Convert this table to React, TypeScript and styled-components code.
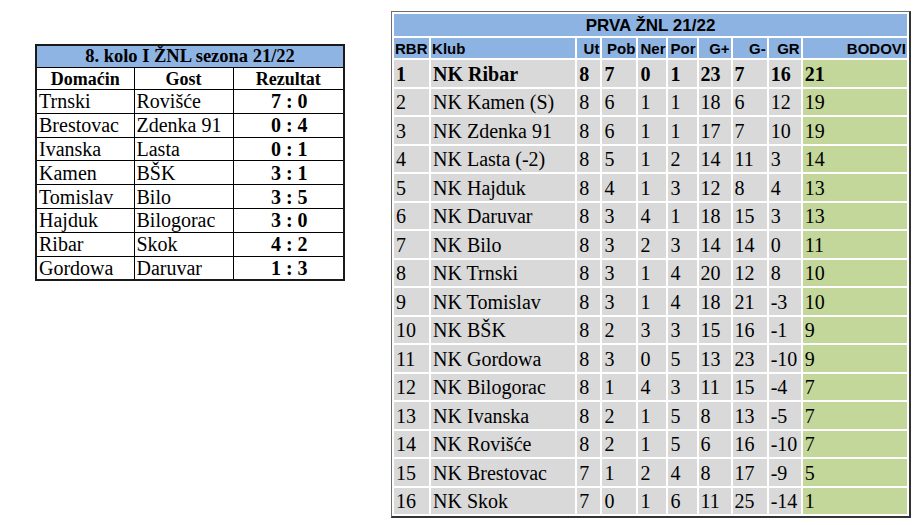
import { createGlobalStyle, styled } from 'styled-components';

const GlobalStyle = createGlobalStyle`
  html, body {
    margin: 0;
    padding: 0;
    background: #ffffff;
  }
  body {
    font-family: "Liberation Serif", "Times New Roman", serif;
    color: #000;
  }
`;

const Page = styled.div`
  display: flex;
  flex-direction: row;
  align-items: flex-start;
  padding: 11px 0 0 35px;
  gap: 46px;
`;

/* ---------- left: fixtures ---------- */

const Fixtures = styled.table`
  margin-top: 33px;
  border-collapse: collapse;
  table-layout: fixed;
  width: 308px;
  border: 2px solid #1a1a1a;
`;

const FixTitle = styled.th`
  background: #8eb4e3;
  height: 21px;
  padding: 0;
  font-family: "Liberation Serif", "Times New Roman", serif;
  font-weight: bold;
  font-size: 18.5px;
  line-height: 1;
  text-align: center;
  border: 1px solid #000;
`;

const FixHead = styled.th`
  height: 21px;
  padding: 0;
  font-family: "Liberation Serif", "Times New Roman", serif;
  font-weight: bold;
  font-size: 18px;
  line-height: 1;
  text-align: center;
  border: 1px solid #000;
`;

const FixCell = styled.td<{ $score?: boolean }>`
  height: 22.8px;
  padding: 0 0 0 2px;
  font-size: 20px;
  line-height: 1;
  white-space: nowrap;
  overflow: hidden;
  border: 1px solid #000;
  text-align: ${(p) => (p.$score ? 'center' : 'left')};
  font-weight: ${(p) => (p.$score ? 'bold' : 'normal')};
`;

const fixtures = [
  ['Trnski', 'Rovišće', '7 : 0'],
  ['Brestovac', 'Zdenka 91', '0 : 4'],
  ['Ivanska', 'Lasta', '0 : 1'],
  ['Kamen', 'BŠK', '3 : 1'],
  ['Tomislav', 'Bilo', '3 : 5'],
  ['Hajduk', 'Bilogorac', '3 : 0'],
  ['Ribar', 'Skok', '4 : 2'],
  ['Gordowa', 'Daruvar', '1 : 3'],
];

/* ---------- right: standings ---------- */

const Standings = styled.table`
  table-layout: fixed;
  width: 520px;
  border-collapse: separate;
  border-spacing: 2px;
  border-style: solid;
  border-width: 1px 2px 2px 1px;
  border-color: #6e6e6e #333 #333 #6e6e6e;
`;

const StTitle = styled.th`
  background: #8db3e2;
  height: 22px;
  padding: 0;
  font-family: "Liberation Sans", Arial, sans-serif;
  font-weight: bold;
  font-size: 17px;
  line-height: 1;
  text-align: center;
`;

const StHead = styled.th<{ $left?: boolean }>`
  background: #8db3e2;
  height: 20px;
  padding: 0 1px 0 1px;
  font-family: "Liberation Sans", Arial, sans-serif;
  font-weight: bold;
  font-size: 15px;
  line-height: 1;
  white-space: nowrap;
  overflow: hidden;
  text-align: ${(p) => (p.$left ? 'left' : 'right')};
`;

const StCell = styled.td<{ $points?: boolean; $lead?: boolean }>`
  background: ${(p) => (p.$points ? '#c4d79b' : '#d9d9d9')};
  height: 25.5px;
  padding: 1px 0 0 2px;
  font-size: 20px;
  line-height: 1;
  white-space: nowrap;
  overflow: hidden;
  text-align: left;
  font-weight: ${(p) => (p.$lead ? 'bold' : 'normal')};
`;

const colWidths = [35, 144, 23, 34, 28, 28, 32, 34, 32, 104];
const headers = ['RBR', 'Klub', 'Ut', 'Pob', 'Ner', 'Por', 'G+', 'G-', 'GR', 'BODOVI'];

const table: (string | number)[][] = [
  [1, 'NK Ribar', 8, 7, 0, 1, 23, 7, 16, 21],
  [2, 'NK Kamen (S)', 8, 6, 1, 1, 18, 6, 12, 19],
  [3, 'NK Zdenka 91', 8, 6, 1, 1, 17, 7, 10, 19],
  [4, 'NK Lasta (-2)', 8, 5, 1, 2, 14, 11, 3, 14],
  [5, 'NK Hajduk', 8, 4, 1, 3, 12, 8, 4, 13],
  [6, 'NK Daruvar', 8, 3, 4, 1, 18, 15, 3, 13],
  [7, 'NK Bilo', 8, 3, 2, 3, 14, 14, 0, 11],
  [8, 'NK Trnski', 8, 3, 1, 4, 20, 12, 8, 10],
  [9, 'NK Tomislav', 8, 3, 1, 4, 18, 21, -3, 10],
  [10, 'NK BŠK', 8, 2, 3, 3, 15, 16, -1, 9],
  [11, 'NK Gordowa', 8, 3, 0, 5, 13, 23, -10, 9],
  [12, 'NK Bilogorac', 8, 1, 4, 3, 11, 15, -4, 7],
  [13, 'NK Ivanska', 8, 2, 1, 5, 8, 13, -5, 7],
  [14, 'NK Rovišće', 8, 2, 1, 5, 6, 16, -10, 7],
  [15, 'NK Brestovac', 7, 1, 2, 4, 8, 17, -9, 5],
  [16, 'NK Skok', 7, 0, 1, 6, 11, 25, -14, 1],
];

export default function App() {
  return (
    <>
      <GlobalStyle />
      <Page>
        <Fixtures>
          <colgroup>
            <col style={{ width: 98 }} />
            <col style={{ width: 99 }} />
            <col style={{ width: 111 }} />
          </colgroup>
          <thead>
            <tr>
              <FixTitle colSpan={3}>8. kolo I ŽNL sezona 21/22</FixTitle>
            </tr>
            <tr>
              <FixHead>Domaćin</FixHead>
              <FixHead>Gost</FixHead>
              <FixHead>Rezultat</FixHead>
            </tr>
          </thead>
          <tbody>
            {fixtures.map(([home, away, score]) => (
              <tr key={home}>
                <FixCell>{home}</FixCell>
                <FixCell>{away}</FixCell>
                <FixCell $score>{score}</FixCell>
              </tr>
            ))}
          </tbody>
        </Fixtures>

        <Standings>
          <colgroup>
            {colWidths.map((w, i) => (
              <col key={i} style={{ width: w }} />
            ))}
          </colgroup>
          <thead>
            <tr>
              <StTitle colSpan={10}>PRVA ŽNL 21/22</StTitle>
            </tr>
            <tr>
              {headers.map((h, i) => (
                <StHead key={h} $left={i < 2}>
                  {h}
                </StHead>
              ))}
            </tr>
          </thead>
          <tbody>
            {table.map((row) => (
              <tr key={row[0]}>
                {row.map((v, i) => (
                  <StCell key={i} $points={i === 9} $lead={row[0] === 1}>
                    {v}
                  </StCell>
                ))}
              </tr>
            ))}
          </tbody>
        </Standings>
      </Page>
    </>
  );
}
